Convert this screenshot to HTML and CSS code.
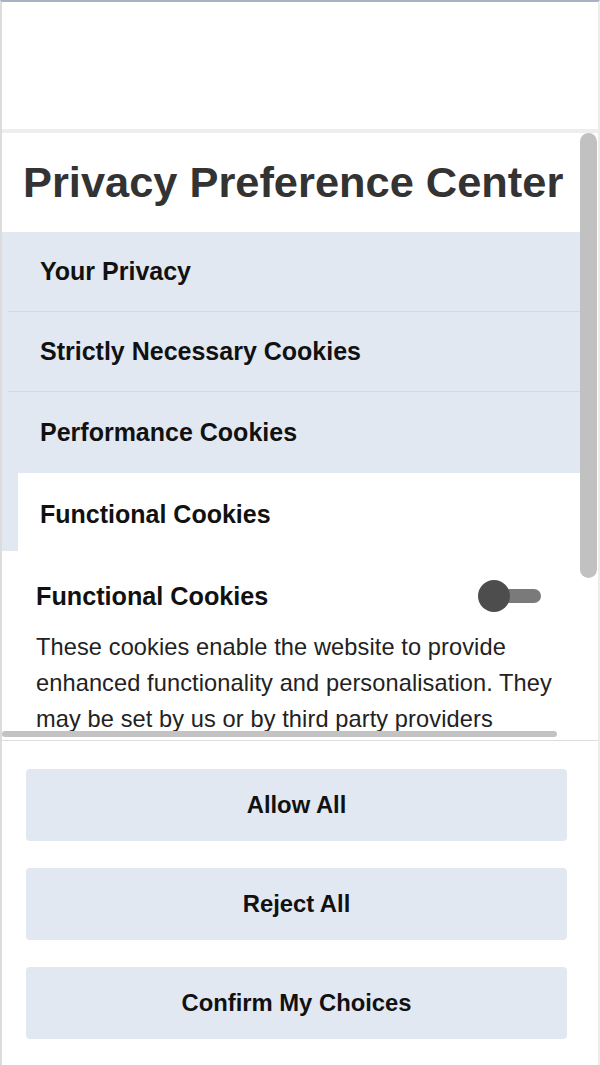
FILE: index.html
```html
<!DOCTYPE html>
<html lang="en">
<head>
<meta charset="utf-8">
<title>Privacy Preference Center</title>
<link rel="stylesheet" href="styles.css">
</head>
<body>
<div class="frame">
  <div class="top-space"></div>
  <div class="divider"></div>
  <div class="pane-row">
    <div class="pane">
      <div class="pane-inner">
        <h2 class="title">Privacy Preference Center</h2>
        <ul class="menu">
          <li class="menu-item"><span>Your Privacy</span></li>
          <li class="menu-item"><span>Strictly Necessary Cookies</span></li>
          <li class="menu-item"><span>Performance Cookies</span></li>
          <li class="menu-item active"><span>Functional Cookies</span></li>
        </ul>
        <div class="detail">
          <div class="detail-head">
            <h3 class="detail-title">Functional Cookies</h3>
            <div class="toggle" role="switch" aria-checked="false">
              <div class="toggle-track"></div>
              <div class="toggle-knob"></div>
            </div>
          </div>
          <p class="detail-text">These cookies enable the website to provide enhanced functionality and personalisation. They may be set by us or by third party providers</p>
        </div>
      </div>
      <div class="hbar"><div class="hbar-thumb"></div></div>
    </div>
    <div class="vbar"><div class="vbar-thumb"></div></div>
  </div>
  <div class="footer">
    <button class="btn">Allow All</button>
    <button class="btn">Reject All</button>
    <button class="btn">Confirm My Choices</button>
  </div>
</div>
</body>
</html>
```

FILE: styles.css
```css
* {
  box-sizing: border-box;
}

html, body {
  margin: 0;
  padding: 0;
  background: #ffffff;
}

body {
  font-family: "Liberation Sans", Arial, sans-serif;
  color: #111111;
}

.frame {
  width: 600px;
  height: 1065px;
  border-top: 2px solid #a9b2c2;
  border-left: 2px solid #dcdcdc;
  border-right: 2px solid #ececec;
  display: flex;
  flex-direction: column;
  overflow: hidden;
}

.top-space {
  height: 127px;
  flex: none;
}

.divider {
  height: 4px;
  background: #eeeeee;
  flex: none;
}

.pane-row {
  display: flex;
  flex: none;
  height: 608px;
  border-bottom: 1px solid #dddddd;
}

.pane {
  width: 578px;
  display: flex;
  flex-direction: column;
}

.pane-inner {
  height: 599px;
  overflow: hidden;
}

.title {
  margin: 0;
  height: 99px;
  padding-left: 21px;
  display: flex;
  align-items: center;
  font-size: 43.4px;
  font-weight: 700;
  color: #333333;
  white-space: nowrap;
}

.menu {
  list-style: none;
  margin: 0;
  padding: 0;
  background: #e1e8f1;
}

.menu-item {
  height: 80px;
  margin-left: 6px;
  padding-left: 32px;
  display: flex;
  align-items: center;
  border-bottom: 1px solid #d4dae1;
  font-size: 25px;
  font-weight: 700;
  color: #111111;
}

.menu-item:nth-child(3) {
  border-bottom: none;
  height: 81px;
}

.menu-item.active {
  height: 78px;
  margin-left: 16px;
  padding-left: 22px;
  padding-top: 5px;
  background: #ffffff;
  border-bottom: none;
}

.detail {
  padding: 29px 36px 0 34px;
}

.detail-head {
  height: 32px;
  display: flex;
  align-items: center;
  justify-content: space-between;
}

.detail-title {
  margin: 0;
  font-size: 25.2px;
  font-weight: 700;
  color: #111111;
}

.toggle {
  position: relative;
  width: 63px;
  height: 32px;
  margin-right: 3px;
}

.toggle-track {
  position: absolute;
  left: 14px;
  right: 0;
  top: 9px;
  height: 14px;
  border-radius: 7px;
  background: #7a7a7a;
}

.toggle-knob {
  position: absolute;
  left: 0;
  top: 0;
  width: 32px;
  height: 32px;
  border-radius: 50%;
  background: #4d4d4d;
}

.detail-text {
  margin: 17px 0 0;
  font-size: 23.6px;
  letter-spacing: 0.1px;
  line-height: 36px;
  color: #222222;
  width: 522px;
}

.hbar {
  height: 9px;
}

.hbar-thumb {
  width: 555px;
  height: 6px;
  border-radius: 3px;
  background: #c3c3c3;
}

.vbar {
  width: 18px;
  display: flex;
  flex-direction: column;
}

.vbar-thumb {
  height: 445px;
  width: 17px;
  border-radius: 9px;
  background: #c1c1c1;
}

.footer {
  padding: 28px 29px 0 24px;
  display: flex;
  flex-direction: column;
  gap: 27px;
}

.btn {
  height: 72px;
  width: 541px;
  border: none;
  border-radius: 4px;
  background: #e1e8f1;
  font-family: "Liberation Sans", Arial, sans-serif;
  font-size: 23.8px;
  font-weight: 700;
  color: #111111;
  padding: 0;
  cursor: pointer;
}
```
